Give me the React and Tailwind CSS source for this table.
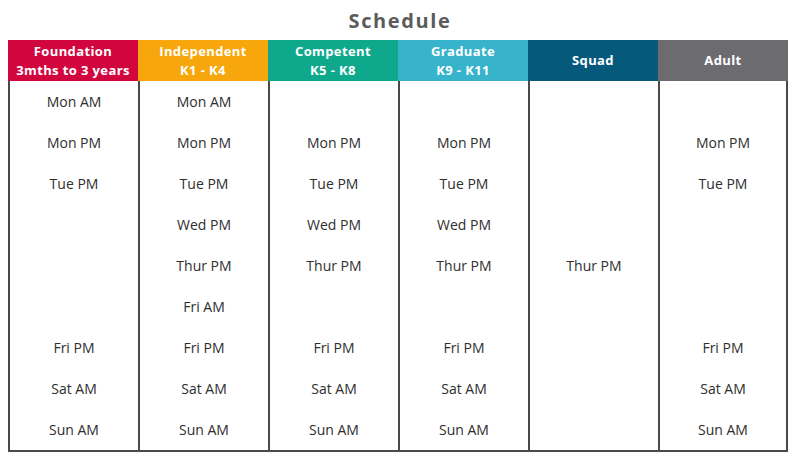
import React from "react";

const columns = [
  {
    title: ["Foundation", "3mths to 3 years"],
    bg: "bg-[#d2063f]",
    slots: ["Mon AM", "Mon PM", "Tue PM", "", "", "", "Fri PM", "Sat AM", "Sun AM"],
  },
  {
    title: ["Independent", "K1 - K4"],
    bg: "bg-[#f7a70b]",
    slots: ["Mon AM", "Mon PM", "Tue PM", "Wed PM", "Thur PM", "Fri AM", "Fri PM", "Sat AM", "Sun AM"],
  },
  {
    title: ["Competent", "K5 - K8"],
    bg: "bg-[#0ea98d]",
    slots: ["", "Mon PM", "Tue PM", "Wed PM", "Thur PM", "", "Fri PM", "Sat AM", "Sun AM"],
  },
  {
    title: ["Graduate", "K9 - K11"],
    bg: "bg-[#38b3cc]",
    slots: ["", "Mon PM", "Tue PM", "Wed PM", "Thur PM", "", "Fri PM", "Sat AM", "Sun AM"],
  },
  {
    title: ["Squad"],
    bg: "bg-[#055a7b]",
    slots: ["", "", "", "", "Thur PM", "", "", "", ""],
  },
  {
    title: ["Adult"],
    bg: "bg-[#6c6b70]",
    slots: ["", "Mon PM", "Tue PM", "", "", "", "Fri PM", "Sat AM", "Sun AM"],
  },
];

export default function App() {
  return (
    <div className="w-[800px] h-[458px] bg-white font-['Open_Sans',sans-serif]">
      {/* Title */}
      <div className="h-10 flex items-center justify-center pt-[1px]">
        <h1 className="text-[20px] font-bold tracking-[0.08em] text-[#5b5b5b]">Schedule</h1>
      </div>

      {/* Table */}
      <div className="ml-2 w-[780px] grid grid-cols-6">
        {columns.map((col, i) => (
          <div key={i} className="flex flex-col">
            <div
              className={`${col.bg} h-[41px] flex flex-col items-center justify-center text-white font-bold text-[13px] leading-[19px] tracking-[0.03em]`}
            >
              {col.title.map((t) => (
                <span key={t}>{t}</span>
              ))}
            </div>
            <div
              className={`border-l-2 border-b-2 border-[#4a4a4a] ${i === columns.length - 1 ? "border-r-2" : ""}`}
            >
              {col.slots.map((s, j) => (
                <div key={j} className="h-[41px] flex items-center justify-center text-[14px] text-[#2e2e2e]">
                  {s}
                </div>
              ))}
            </div>
          </div>
        ))}
      </div>
    </div>
  );
}
